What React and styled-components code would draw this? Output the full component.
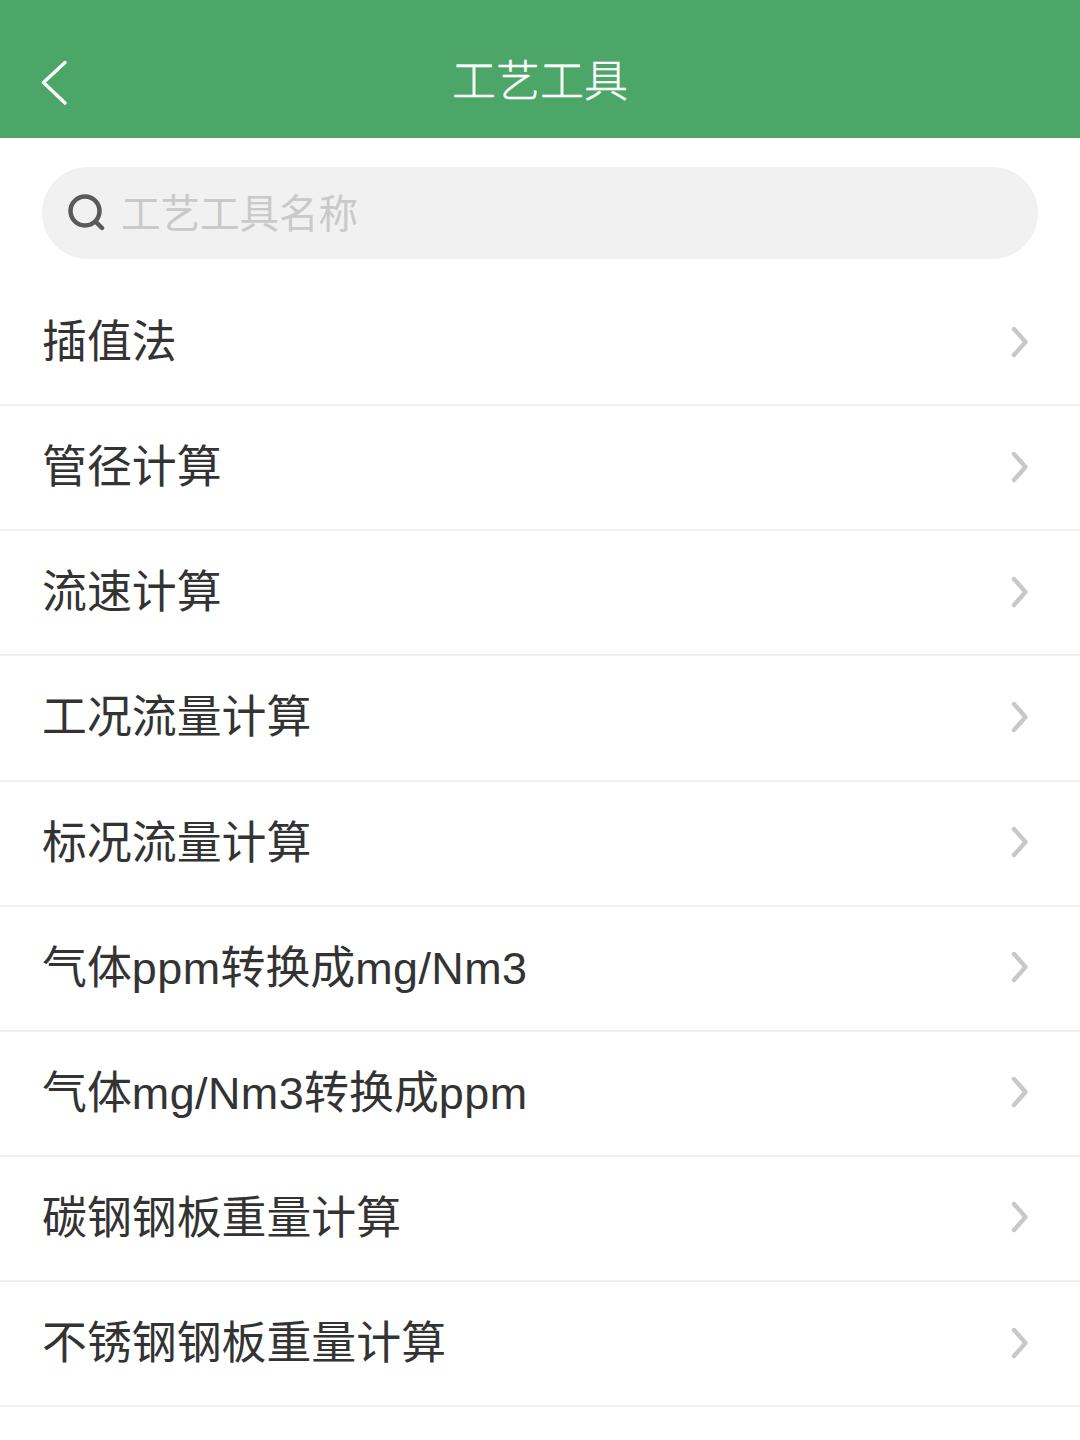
import styled, { createGlobalStyle } from "styled-components";

const GlobalStyle = createGlobalStyle`
  html, body { margin: 0; padding: 0; background: #ffffff; }
`;

const Page = styled.div`
  width: 1080px;
  height: 1440px;
  overflow: hidden;
  background: #ffffff;
  font-family: "Liberation Sans", "Noto Sans CJK SC", sans-serif;
`;

const Header = styled.header`
  height: 138px;
  background: #4ba668;
  position: relative;
  display: flex;
  align-items: center;
  justify-content: center;
  padding-top: 26px;
  box-sizing: border-box;
`;

const BackButton = styled.svg`
  position: absolute;
  left: 38px;
  top: 57px;
  width: 34px;
  height: 52px;
`;

const Title = styled.h1`
  margin: 0;
  font-size: 44px;
  font-weight: 300;
  color: #ffffff;
  line-height: 50px;
  -webkit-text-stroke: 0.4px #ffffff;
`;

const SearchWrap = styled.div`
  padding: 29px 42px 22px;
`;

const SearchBar = styled.div`
  height: 92px;
  border-radius: 46px;
  background: #f1f1f1;
  display: flex;
  align-items: center;
  padding-left: 25px;
  gap: 16px;
`;

const SearchIcon = styled.svg`
  width: 38px;
  height: 38px;
`;

const Placeholder = styled.span`
  font-size: 39.5px;
  color: #c9c9c9;
  margin-bottom: 6px;
`;

const List = styled.ul`
  list-style: none;
  margin: 0;
  padding: 0;
`;

const Row = styled.li`
  height: 123.13px;
  border-bottom: 2px solid #efefef;
  display: flex;
  align-items: center;
  justify-content: space-between;
  padding: 0 50px 0 42px;
`;

const Label = styled.span`
  font-size: 44.9px;
  color: #333333;
  margin-bottom: 8px;
`;

const Latin = styled.span`
  letter-spacing: 0.45px;
`;

const Chevron = styled.svg`
  width: 20px;
  height: 36px;
  margin-bottom: 2px;
`;

const items = [
  "插值法",
  "管径计算",
  "流速计算",
  "工况流量计算",
  "标况流量计算",
  "气体ppm转换成mg/Nm3",
  "气体mg/Nm3转换成ppm",
  "碳钢钢板重量计算",
  "不锈钢钢板重量计算",
];

function renderLabel(text) {
  return text
    .split(/([A-Za-z0-9/]+)/)
    .map((part, i) => (i % 2 === 1 ? <Latin key={i}>{part}</Latin> : part));
}

export default function App() {
  return (
    <Page>
      <GlobalStyle />
      <Header>
        <BackButton viewBox="0 0 34 52" fill="none">
          <path d="M27 5.5 L5.5 25.5 L27 46" stroke="#fff" strokeWidth="3.4" strokeLinecap="round" strokeLinejoin="round" />
        </BackButton>
        <Title>工艺工具</Title>
      </Header>
      <SearchWrap>
        <SearchBar>
          <SearchIcon viewBox="0 0 38 38" fill="none">
            <circle cx="18" cy="17" r="14.5" stroke="#5a5a5a" strokeWidth="4.5" />
            <path d="M29 28 L35 34" stroke="#5a5a5a" strokeWidth="4.5" strokeLinecap="round" />
          </SearchIcon>
          <Placeholder>工艺工具名称</Placeholder>
        </SearchBar>
      </SearchWrap>
      <List>
        {items.map((item) => (
          <Row key={item}>
            <Label>{renderLabel(item)}</Label>
            <Chevron viewBox="0 0 20 36" fill="none">
              <path d="M4 5 L15.5 18 L4 31" stroke="#c8c8c8" strokeWidth="4.4" strokeLinecap="round" strokeLinejoin="round" />
            </Chevron>
          </Row>
        ))}
      </List>
    </Page>
  );
}
